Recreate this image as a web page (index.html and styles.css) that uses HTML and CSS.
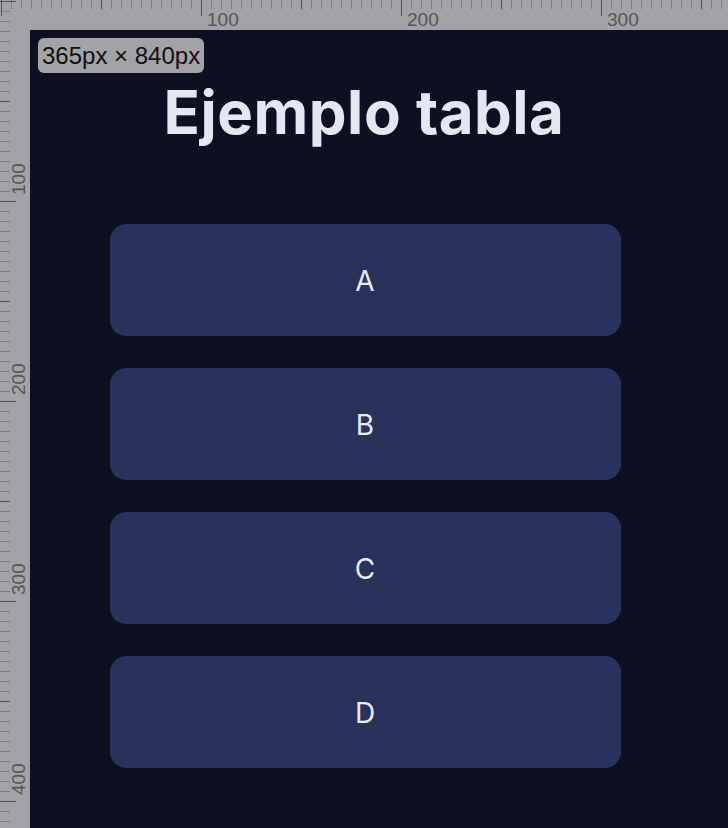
FILE: index.html
```html
<!DOCTYPE html>
<html lang="es">
<head>
<meta charset="utf-8">
<title>Ejemplo tabla</title>
<link rel="stylesheet" href="styles.css">
</head>
<body>
<div class="app">
  <div class="ruler-top">
    <span class="ruler-gap-x"></span>
    <span class="label-x">100</span>
    <span class="label-x">200</span>
    <span class="label-x">300</span>
  </div>
  <div class="ruler-left">
    <span class="ruler-gap-y"></span>
    <span class="label-y">100</span>
    <span class="label-y">200</span>
    <span class="label-y">300</span>
    <span class="label-y">400</span>
  </div>
  <div class="viewport">
    <div class="page">
      <h1 class="title">Ejemplo tabla</h1>
      <div class="list">
        <div class="card">A</div>
        <div class="card">B</div>
        <div class="card">C</div>
        <div class="card">D</div>
      </div>
    </div>
    <div class="size-badge">365px × 840px</div>
  </div>
</div>
</body>
</html>
```

FILE: styles.css
```css
html, body {
  margin: 0;
  padding: 0;
  height: 100%;
  overflow: hidden;
}

.app {
  display: grid;
  grid-template-columns: 30px 1fr;
  grid-template-rows: 30px 1fr;
  width: 728px;
  height: 828px;
  background: #a2a2a7;
  font-family: "Liberation Sans", Arial, sans-serif;
}

.ruler-top {
  grid-row: 1;
  grid-column: 1 / -1;
  display: flex;
  align-items: flex-start;
  background-image:
    repeating-linear-gradient(to right, #505055 0 1px, transparent 1px 200px),
    repeating-linear-gradient(to right, #505055 0 1px, transparent 1px 100px),
    repeating-linear-gradient(to right, #7e7e83 0 1px, transparent 1px 10px);
  background-size: 100% 16px, 100% 9px, 100% 9px;
  background-position: 1px 0, 1px 0, 1px 0;
  background-repeat: no-repeat;
  overflow: hidden;
}

.ruler-gap-x {
  flex: 0 0 201px;
}

.label-x {
  flex: 0 0 200px;
  box-sizing: border-box;
  padding-left: 6px;
  padding-top: 10px;
  font-size: 19px;
  line-height: 20px;
  color: #56565b;
}

.ruler-left {
  grid-row: 1 / -1;
  grid-column: 1;
  display: flex;
  flex-direction: column;
  background-image:
    repeating-linear-gradient(to bottom, #505055 0 1px, transparent 1px 200px),
    repeating-linear-gradient(to bottom, #505055 0 1px, transparent 1px 100px),
    repeating-linear-gradient(to bottom, #7e7e83 0 1px, transparent 1px 10px);
  background-size: 16px 100%, 10px 100%, 10px 100%;
  background-position: 0 1px, 0 1px, 0 1px;
  background-repeat: no-repeat;
  overflow: hidden;
}

.ruler-gap-y {
  flex: 0 0 163px;
}

.label-y {
  flex: 0 0 200px;
  box-sizing: border-box;
  writing-mode: vertical-rl;
  transform: rotate(180deg);
  text-align: right;
  padding-right: 9px;
  font-size: 19px;
  line-height: 20px;
  color: #56565b;
}

.viewport {
  grid-row: 2;
  grid-column: 2;
  position: relative;
  overflow: hidden;
  background: #0c1020;
}

.page {
  width: 730px;
  margin-left: -30px;
  padding-top: 46px;
}

.title {
  margin: 0;
  padding-right: 2px;
  text-align: center;
  font-family: Inter, "Noto Sans", sans-serif;
  font-weight: 700;
  font-size: 60px;
  line-height: 72px;
  letter-spacing: 0.5px;
  color: #e4e7f0;
}

.list {
  display: flex;
  flex-direction: column;
  gap: 32px;
  width: 511px;
  margin: 76px auto 0;
}

.card {
  height: 112px;
  border-radius: 16px;
  background: #28325a;
  display: flex;
  align-items: center;
  justify-content: center;
  padding-top: 2px;
  box-sizing: border-box;
  font-family: Inter, "Noto Sans", sans-serif;
  font-weight: 400;
  font-size: 28px;
  color: #e8eaf4;
}

.size-badge {
  position: absolute;
  left: 8px;
  top: 8px;
  padding: 0 4px;
  height: 35px;
  line-height: 35px;
  border-radius: 6px;
  background: #a2a2a7;
  color: #111;
  font-family: "Liberation Sans", Arial, sans-serif;
  font-size: 24px;
}
```
